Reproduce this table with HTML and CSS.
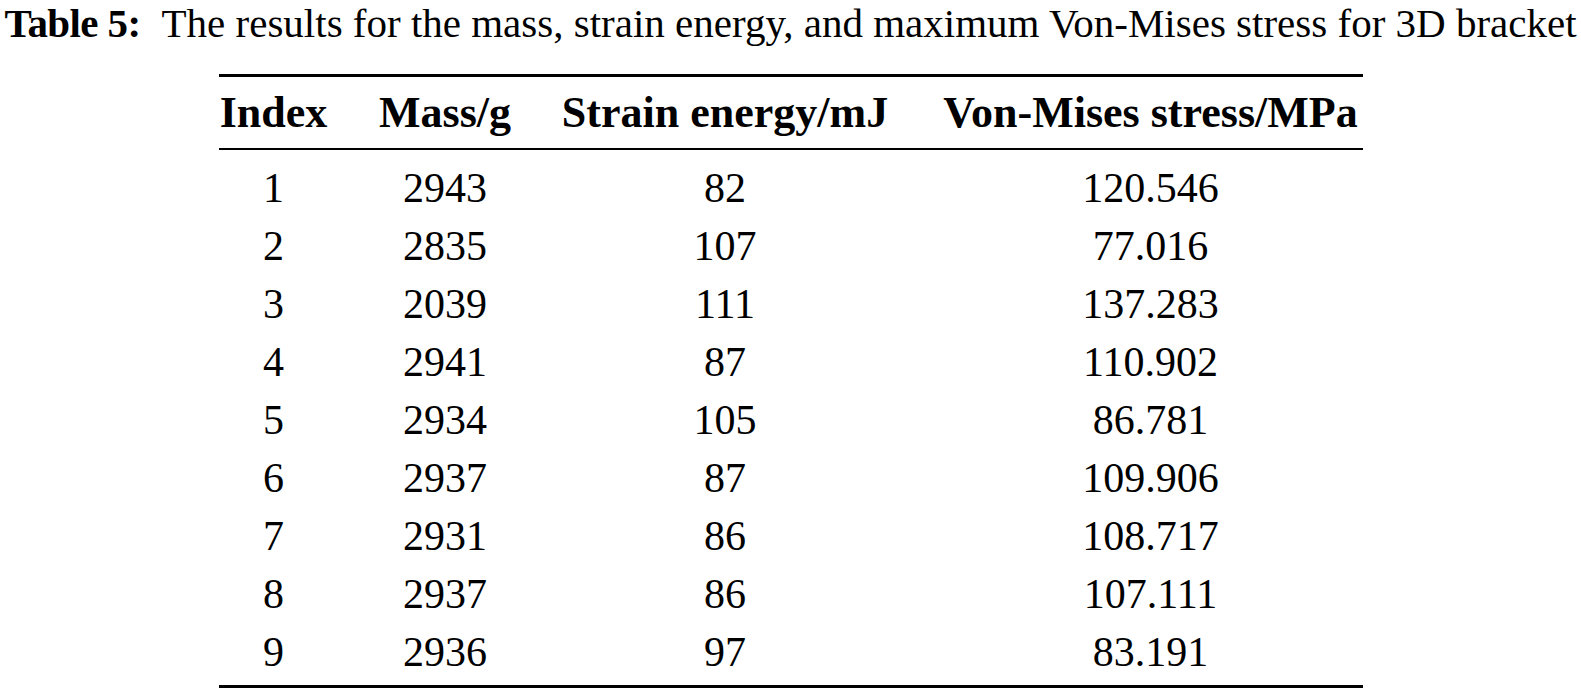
FILE: index.html
```html
<!DOCTYPE html>
<html lang="en">
<head>
<meta charset="utf-8">
<title>Table 5</title>
<link rel="stylesheet" href="styles.css">
</head>
<body>
<div class="page">
  <p class="caption"><span class="label">Table 5:</span>The results for the mass, strain energy, and maximum Von-Mises stress for 3D bracket</p>
  <table class="results">
    <thead>
      <tr>
        <th class="c1">Index</th>
        <th class="c2">Mass/g</th>
        <th class="c3">Strain energy/mJ</th>
        <th class="c4">Von-Mises stress/MPa</th>
      </tr>
    </thead>
    <tbody>
      <tr><td class="c1">1</td><td class="c2">2943</td><td class="c3">82</td><td class="c4">120.546</td></tr>
      <tr><td class="c1">2</td><td class="c2">2835</td><td class="c3">107</td><td class="c4">77.016</td></tr>
      <tr><td class="c1">3</td><td class="c2">2039</td><td class="c3">111</td><td class="c4">137.283</td></tr>
      <tr><td class="c1">4</td><td class="c2">2941</td><td class="c3">87</td><td class="c4">110.902</td></tr>
      <tr><td class="c1">5</td><td class="c2">2934</td><td class="c3">105</td><td class="c4">86.781</td></tr>
      <tr><td class="c1">6</td><td class="c2">2937</td><td class="c3">87</td><td class="c4">109.906</td></tr>
      <tr><td class="c1">7</td><td class="c2">2931</td><td class="c3">86</td><td class="c4">108.717</td></tr>
      <tr><td class="c1">8</td><td class="c2">2937</td><td class="c3">86</td><td class="c4">107.111</td></tr>
      <tr><td class="c1">9</td><td class="c2">2936</td><td class="c3">97</td><td class="c4">83.191</td></tr>
    </tbody>
  </table>
</div>
</body>
</html>
```

FILE: styles.css
```css
html, body {
  margin: 0;
  padding: 0;
  background: #ffffff;
}

.page {
  font-family: "Liberation Serif", "Times New Roman", serif;
  font-size: 42px;
  color: #000000;
}

.caption {
  margin: 0;
  font-size: 41px;
  line-height: 46px;
  text-align: center;
  white-space: nowrap;
}

.label {
  font-weight: bold;
  letter-spacing: -0.6px;
  margin-right: 21px;
}

.results {
  margin: 28px auto 0;
  width: 1144px;
  border-collapse: separate;
  border-spacing: 0;
  border-top: 3px solid #000;
  border-bottom: 3px solid #000;
  table-layout: fixed;
}

.results th,
.results td {
  padding: 0 25px;
  line-height: 58px;
  text-align: center;
  white-space: nowrap;
}

.results th {
  font-size: 44px;
  font-weight: bold;
  padding-top: 7px;
  padding-bottom: 6px;
  border-bottom: 2px solid #000;
}

.results tbody tr:first-child td {
  padding-top: 9px;
}

.results tbody tr:last-child td {
  padding-bottom: 4px;
}

.results .c1 {
  width: 110px;
  padding-left: 0;
}

.results .c2 {
  width: 133px;
}

.results .c3 {
  width: 327px;
}

.results .c4 {
  width: 424px;
  padding-right: 0;
}
```
